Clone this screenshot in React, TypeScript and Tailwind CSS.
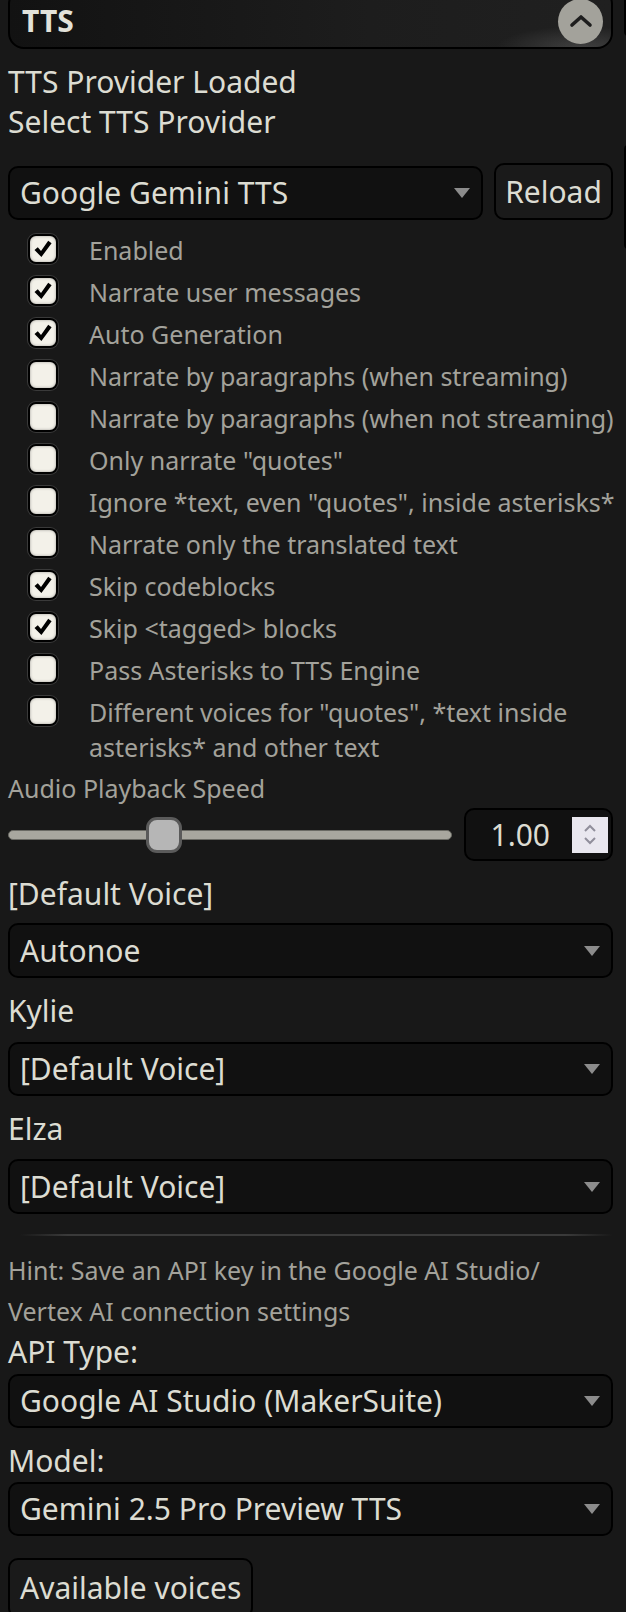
import React from "react";

const Arrow = () => (
  <svg width="16" height="10" viewBox="0 0 16 10" className="shrink-0">
    <polygon points="0,0 16,0 8,10" fill="#8c8c8c" />
  </svg>
);

function Select({ text, className = "" }: { text: string; className?: string }) {
  return (
    <div
      className={`h-[54px] rounded-[10px] border-2 border-black bg-[#111111] flex items-center justify-between pl-[10px] pr-[11px] ${className}`}
    >
      <span className="text-[30px] leading-none text-[#dcdcd2] whitespace-nowrap">{text}</span>
      <Arrow />
    </div>
  );
}

function Check({ checked }: { checked: boolean }) {
  return (
    <div className="w-[30px] h-[30px] shrink-0 rounded-[8px] border-2 border-black bg-[#f3f1e9] shadow-[0_0_0_1px_#3a3a3a,inset_0_0_3px_rgba(0,0,0,0.35)] flex items-center justify-center">
      {checked && (
        <svg width="20" height="20" viewBox="0 0 20 20">
          <path d="M1.5 11 L4.8 8.3 L8 12 L15.2 1.8 L18.6 4.2 L8.4 18 Z" fill="#000" />
        </svg>
      )}
    </div>
  );
}

const items: [string, boolean][] = [
  ["Enabled", true],
  ["Narrate user messages", true],
  ["Auto Generation", true],
  ["Narrate by paragraphs (when streaming)", false],
  ["Narrate by paragraphs (when not streaming)", false],
  ['Only narrate "quotes"', false],
  ['Ignore *text, even "quotes", inside asterisks*', false],
  ["Narrate only the translated text", false],
  ["Skip codeblocks", true],
  ["Skip <tagged> blocks", true],
  ["Pass Asterisks to TTS Engine", false],
  ['Different voices for "quotes", *text inside asterisks* and other text', false],
];

export default function App() {
  return (
    <div className="relative w-[626px] h-[1612px] overflow-hidden bg-[#181818] font-['Noto_Sans',sans-serif] text-[#dcdcd2]">
      {/* edges of neighbouring panel peeking at the right */}
      <div className="absolute right-[-6px] top-[-20px] w-[8px] h-[56px] rounded-[6px] border-2 border-black" />
      <div className="absolute right-[-6px] top-[145px] w-[8px] h-[104px] rounded-[6px] border-2 border-black" />

      <div className="pl-[8px] pr-[13px]">
        {/* Header */}
        <div className="mt-[-12px] h-[61px] rounded-[16px] border-2 border-black bg-[radial-gradient(ellipse_120px_30px_at_95%_100%,rgba(255,255,255,0.14),transparent_70%),linear-gradient(90deg,#121212,#1d1d1d_60%,#202020)] flex items-center justify-between pt-[5px] pl-[12px] pr-[8px]">
          <span className="text-[30px] font-bold leading-none text-[#e2e2da]">TTS</span>
          <div className="w-[45px] h-[45px] rounded-full bg-[#a3a29b] flex items-center justify-center">
            <svg width="24" height="14" viewBox="0 0 24 14">
              <path d="M3 11 L12 3 L21 11" stroke="#1e1e1e" strokeWidth="3.6" fill="none" strokeLinecap="round" strokeLinejoin="round" />
            </svg>
          </div>
        </div>

        <div className="mt-[13px] text-[30px] leading-[40px]">TTS Provider Loaded</div>
        <div className="text-[30px] leading-[40px]">Select TTS Provider</div>

        <div className="mt-[21px] flex items-end gap-[11px]">
          <Select text="Google Gemini TTS" className="flex-1" />
          <div className="h-[57px] w-[119px] rounded-[10px] border-2 border-black bg-[#1a1a1a] flex items-center justify-center text-[30px] leading-none">
            Reload
          </div>
        </div>

        {/* Checkboxes */}
        <div className="mt-[13px] flex flex-col gap-[7px]">
          {items.map(([label, checked]) => (
            <div key={label} className="flex items-start mr-[-13px]">
              <div className="ml-[20px] mt-[1px]">
                <Check checked={checked} />
              </div>
              <div className="ml-[31px] text-[25px] leading-[35px] text-[#a3a29b]">{label}</div>
            </div>
          ))}
        </div>

        <div className="mt-[6px] text-[25px] leading-[35px] text-[#a3a29b]">Audio Playback Speed</div>

        <div className="mt-[2px] h-[53px] flex items-center gap-[12px]">
          <div className="relative flex-1 h-[10px] rounded-full bg-[#a8a79f] border border-[#6a6a64]">
            <div className="absolute left-[137px] top-[-14px] w-[36px] h-[36px] rounded-[11px] bg-[#b6b6b6] border-[3px] border-[#5a5a5a]" />
          </div>
          <div className="w-[149px] h-[53px] rounded-[10px] border-2 border-black bg-[#111111] flex items-center justify-end pr-[3px]">
            <span className="text-[30px] leading-none mr-[22px]">1.00</span>
            <div className="w-[36px] h-[36px] bg-[#e9e7ef] flex flex-col items-center justify-center gap-[3px]">
              <svg width="16" height="9" viewBox="0 0 16 9">
                <path d="M3 7 L8 2 L13 7" stroke="#908e9b" strokeWidth="2" fill="none" />
              </svg>
              <svg width="16" height="9" viewBox="0 0 16 9">
                <path d="M3 2 L8 7 L13 2" stroke="#908e9b" strokeWidth="2" fill="none" />
              </svg>
            </div>
          </div>
        </div>

        <div className="mt-[13px] text-[30px] leading-[40px]">[Default Voice]</div>
        <Select text="Autonoe" className="mt-[9px] h-[55px]" />
        <div className="mt-[13px] text-[30px] leading-[40px]">Kylie</div>
        <Select text="[Default Voice]" className="mt-[11px]" />
        <div className="mt-[13px] text-[30px] leading-[40px]">Elza</div>
        <Select text="[Default Voice]" className="mt-[10px] h-[55px]" />

        <div className="mt-[20px] ml-[12px] h-[2px] bg-[linear-gradient(90deg,transparent,#3a3a3a_8%,#3a3a3a_92%,transparent)]" />

        <div className="mt-[14px] text-[25px] leading-[41px] text-[#a3a29b]">
          Hint: Save an API key in the Google AI Studio/
          <br />
          Vertex AI connection settings
        </div>

        <div className="text-[30px] leading-[40px]">API Type:</div>
        <Select text="Google AI Studio (MakerSuite)" className="mt-[2px]" />
        <div className="mt-[13px] text-[30px] leading-[40px]">Model:</div>
        <Select text="Gemini 2.5 Pro Preview TTS" className="mt-[1px]" />

        <div className="mt-[22px] inline-flex h-[60px] px-[10px] items-center rounded-[10px] border-2 border-black bg-[#1a1a1a] text-[30px] leading-none">
          Available voices
        </div>
      </div>
    </div>
  );
}
